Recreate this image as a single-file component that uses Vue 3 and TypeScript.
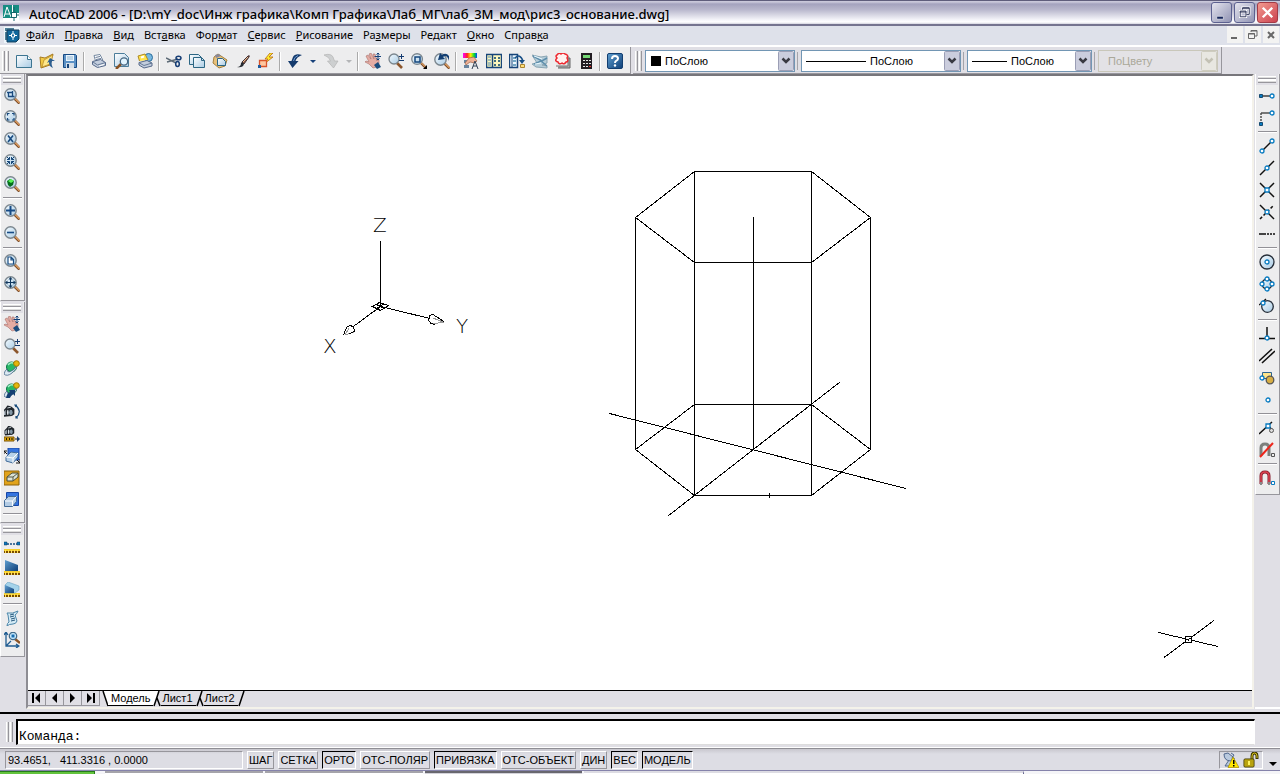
<script setup lang="ts">
interface Tool { icon: string; label: string }
type ToolGroup = Tool[]
interface Menu { pre: string; key: string; post: string }
interface Mode { text: string; on: boolean }

const t = (icon: string, label: string): Tool => ({ icon, label })
const m = (pre: string, key: string, post: string): Menu => ({ pre, key, post })

const menus: Menu[] = [
  m('', 'Ф', 'айл'), m('', 'П', 'равка'), m('', 'В', 'ид'), m('Вст', 'а', 'вка'),
  m('Фор', 'м', 'ат'), m('', 'С', 'ервис'), m('', 'Р', 'исование'), m('Ра', 'з', 'меры'),
  m('Ре', 'д', 'акт'), m('', 'О', 'кно'), m('Справ', 'к', 'а'),
]

const standard: ToolGroup[] = [
  [t('new', 'Создать'), t('open', 'Открыть'), t('save', 'Сохранить')],
  [t('print', 'Печать'), t('preview', 'Просмотр'), t('publish', 'Публикация')],
  [t('cut', 'Вырезать'), t('copy', 'Копировать'), t('paste', 'Вставить'), t('brush', 'Копирование свойств'), t('block', 'Редактор блоков')],
  [t('undo', 'Отменить'), t('redo', 'Повторить')],
  [t('pan', 'Панорамирование'), t('zoomrt', 'Зумирование'), t('zoomwin', 'Показать рамкой'), t('zoomprev', 'Показать предыдущий')],
  [t('props', 'Свойства'), t('center', 'Центр управления'), t('palettes', 'Инструментальные палитры'), t('sheets', 'Диспетчер подшивок'), t('markup', 'Диспетчер пометок'), t('calc', 'Калькулятор')],
  [t('help', 'Справка')],
]

const leftBars: ToolGroup[][] = [
  [
    [t('zwindow', 'Рамка'), t('zdynamic', 'Динамика'), t('zscale', 'Масштаб'), t('zcenter', 'Центр'), t('zobject', 'Объект')],
    [t('zin', 'Увеличить'), t('zout', 'Уменьшить')],
    [t('zall', 'Все'), t('zextents', 'Границы')],
  ],
  [
    [t('pan', 'Панорама'), t('zoomrt', 'Зум'), t('orbit', 'Орбита'), t('corbit', 'Непрерывная орбита'), t('swivel', 'Шарнир'), t('distance', 'Расстояние'), t('adjust', 'Секущие плоскости'), t('front', 'Передняя плоскость'), t('back', 'Задняя плоскость')],
    [],
  ],
  [
    [t('dist', 'Расстояние'), t('area', 'Площадь'), t('mass', 'Масса')],
    [t('list', 'Список'), t('locate', 'Координаты')],
  ],
]

const snapBar: ToolGroup[] = [
  [t('track', 'Точка отслеживания'), t('from', 'Смещение')],
  [t('endp', 'Конточка'), t('midp', 'Середина'), t('inter', 'Пересечение'), t('appint', 'Кажущееся пересечение'), t('ext', 'Продолжение')],
  [t('cen', 'Центр'), t('quad', 'Квадрант'), t('tan', 'Касательная')],
  [t('perp', 'Нормаль'), t('par', 'Параллельно'), t('ins', 'Точка вставки'), t('node', 'Узел')],
  [t('near', 'Ближайшая'), t('none', 'Ничего')],
  [t('magnet', 'Режимы привязки')],
]

const modes: Mode[] = [
  { text: 'ШАГ', on: false }, { text: 'СЕТКА', on: false }, { text: 'ОРТО', on: true },
  { text: 'ОТС-ПОЛЯР', on: false }, { text: 'ПРИВЯЗКА', on: true }, { text: 'ОТС-ОБЪЕКТ', on: false },
  { text: 'ДИН', on: false }, { text: 'ВЕС', on: true }, { text: 'МОДЕЛЬ', on: true },
]

const navs = [
  { label: 'Первый лист', d: 'M4 3h2v10h-2zM12 3v10l-5-5z' },
  { label: 'Предыдущий лист', d: 'M11 3v10l-5-5z' },
  { label: 'Следующий лист', d: 'M6 3v10l5-5z' },
  { label: 'Последний лист', d: 'M5 3v10l5-5zM11 3h2v10h-2z' },
]
</script>

<template>
  <svg class="defs" aria-hidden="true">
    <defs>
      <linearGradient id="gGlass" x2="1" y2="1"><stop offset="0" stop-color="#f4fbff" /><stop offset="1" stop-color="#a9cbe4" /></linearGradient>
      <linearGradient id="gPage" x2="1" y2="1"><stop offset="0" stop-color="#fff" /><stop offset="1" stop-color="#a9cbe4" /></linearGradient>
      <linearGradient id="gBlue" x2="1" y2="1"><stop offset="0" stop-color="#5f9fd0" /><stop offset="1" stop-color="#0f3f78" /></linearGradient>
      <linearGradient id="gHue"><stop offset="0" stop-color="#f0f" /><stop offset=".3" stop-color="#f22" /><stop offset=".55" stop-color="#fe0" /><stop offset=".8" stop-color="#0d3" /><stop offset="1" stop-color="#04f" /></linearGradient>
    </defs>
    <symbol id="mag" viewBox="0 0 16 16"><path d="M10.500 10.500l5 5" stroke="#7a4a26" stroke-width="2.600" /><path d="M11 10.500l4.500 4.500" stroke="#dd9f63" stroke-width="1.300" /><circle cx="6.500" cy="6.500" r="5.700" fill="url(#gGlass)" stroke="#7b868e" stroke-width="1.400" /></symbol>
    <symbol id="ruler" viewBox="0 0 16 16"><path d="M0 11h16v4H0z" fill="#7a4c00" /><path d="M0 11h16v2H0z" fill="#f7cf28" /><path d="M1.500 12v3M4.500 12v3M7.500 12v3M10.500 12v3M13.500 12v3" stroke="#ffe258" /></symbol>
    <symbol id="new" viewBox="0 0 16 16"><path d="M.5 2.500h11l4 4v8H.5z" fill="url(#gPage)" stroke="#3d7591" /><path d="M11.500 2.500v4h4" fill="#fff" stroke="#3d7591" /></symbol>
    <symbol id="open" viewBox="0 0 16 16"><path d="M1 4l5 1 8-4-3 11-9 3z" fill="#f2ca45" stroke="#a67b22" /><path d="M3 14l2-7 9-5-3 9z" fill="#ffe889" stroke="#b38524" stroke-width=".7" /><path d="M14 15c-3-1-4-3-4-6l-2 1 3-5 5 3h-3c-1 3 0 5 1 7z" fill="#2d5f91" /></symbol>
    <symbol id="save" viewBox="0 0 16 16"><path d="M1.500 1.500h12l1 1v12h-13z" fill="#5c91c5" stroke="#174a83" /><path d="M4 2h8v6H4z" fill="#e9f4fc" /><path d="M4 10h8v5H4z" fill="#d5dee7" /><path d="M5 11h2v4H5z" fill="#17447a" /><path d="M5 4h6M5 6h6" stroke="#8eb3d0" /></symbol>
    <symbol id="print" viewBox="0 0 16 16"><path d="M4.500 8L3 2.500l6-1 3 6" fill="#fff" stroke="#7488a0" /><path d="M1.500 8.500l8-2 5 3v3l-8 2-5-3z" fill="#c3cddd" stroke="#56698a" /><path d="M2 9l4.500 3 8-2.500M4.500 4.500l4.500-1M5 6.500l5-1" stroke="#667a97" fill="none" /><path d="M8 13l5-1.500" stroke="#fff" /></symbol>
    <symbol id="preview" viewBox="0 0 16 16"><path d="M.5.5h10l4 4v9H.5z" fill="url(#gPage)" stroke="#4b7d9b" /><path d="M7 11l-5 5" stroke="#895324" stroke-width="2.500" /><circle cx="10" cy="8.500" r="3.700" fill="#e1f4ff" stroke="#466680" stroke-width="1.300" /></symbol>
    <symbol id="publish" viewBox="0 0 16 16"><circle cx="11.500" cy="4.500" r="4" fill="#77b8e1" stroke="#2c6d9a" /><path d="M2.500 8L1 3l7-2 3 6" fill="#ffe24c" stroke="#ae8b22" /><path d="M2 9.500l8-2 5 2.500v3l-8 2-5-3z" fill="#c3cddd" stroke="#56698a" /><path d="M2.500 10l4.500 2.500 8-2.500" fill="none" stroke="#667a97" /><path d="M4 4.500l3-1" stroke="#fff" stroke-width="2" /></symbol>
    <symbol id="cut" viewBox="0 0 16 16"><path d="M0 5l10 5M1 9l11-3" stroke="#5d6a76" stroke-width="1.500" /><ellipse cx="12.500" cy="5" rx="2.500" ry="1.800" fill="none" stroke="#163d75" stroke-width="1.500" /><ellipse cx="11.500" cy="11" rx="1.800" ry="2.500" fill="none" stroke="#163d75" stroke-width="1.500" /></symbol>
    <symbol id="copy" viewBox="0 0 16 16"><path d="M.5 1.500h9l3 3v7H.5z" fill="url(#gPage)" stroke="#2c6684" /><path d="M4.500 4.500h8l3 3v7h-11z" fill="url(#gPage)" stroke="#2c6684" /><path d="M12.500 4.500v3h3" fill="none" stroke="#2c6684" /></symbol>
    <symbol id="paste" viewBox="0 0 16 16"><path d="M2 4l4-3 9 6-2 6-6 2-6-5z" fill="#e8c07a" stroke="#a3803f" /><path d="M3 2l4-1 2 2-5 2z" fill="#889" /><path d="M5.500 5.500h5l3 3v4h-8z" fill="url(#gPage)" stroke="#2c6684" /></symbol>
    <symbol id="brush" viewBox="0 0 16 16"><path d="M7 9l6-6q2-1 1 1L9 11z" fill="#8d5b42" stroke="#443337" /><path d="M2 14q4 0 4-4l1-1 2 2q-1 4-7 3z" fill="#252a31" /><path d="M8 9l5-5" stroke="#e8bc94" /></symbol>
    <symbol id="block" viewBox="0 0 16 16"><path d="M12 0L7 6h3L6 11l9-7h-4l4-4z" fill="#ffec28" stroke="#b66712" stroke-width=".8" /><path d="M1.500 7.500h7v6h-7z" fill="#ffc79f" stroke="#d8532b" stroke-width="1.300" /><path d="M0 12h3v3H0z" fill="#1e5c9e" /></symbol>
    <symbol id="undo" viewBox="0 0 16 16"><path d="M15 2Q8 0 6 4L4.500 8H1l4.500 7 6-7H8.500q1-4 6.500-6z" fill="#143a6c" /><path d="M11 2.500Q7 4 6.500 8" stroke="#6e9ad0" fill="none" /></symbol>
    <symbol id="redo" viewBox="0 0 16 16"><path d="M1 2q7-2 9 2l1.500 4H15l-4.500 7-6-7h3Q6.500 4 1 2z" fill="#cdcfd0" stroke="#b5b5b5" stroke-width=".7" /></symbol>
    <symbol id="pan" viewBox="0 0 16 16"><path d="M1 3l2-1 3 4-2-5 2-1 3 6-1-5 2 0 2 7v-2l2 1v4l-2 3-4 1-4-4-4-2 1-1 3 1z" fill="#e5aca3" stroke="#a8706c" stroke-width=".6" /><path d="M9 12l4-3 3 5-4 2z" fill="#1b4c7d" /><path d="M13 0v7M9.500 3.500h7" stroke="#123f78" /><path d="M11.500 1.500L13 0l1.500 1.500M11.500 5.500L13 7l1.500-1.500" fill="none" stroke="#123f78" /></symbol>
    <symbol id="zoomrt" viewBox="0 0 16 16"><path d="M9 10l5 5" stroke="#8c562c" stroke-width="2.600" /><circle cx="6" cy="6" r="5" fill="url(#gGlass)" stroke="#7b868e" stroke-width="1.300" /><path d="M11 3.500h5M13.500 1v5M11 7.500h5" stroke="#143b70" /></symbol>
    <symbol id="zoomwin" viewBox="0 0 16 16"><use href="#mag" width="15" height="15" /><path d="M4 4h5v5H4z" fill="none" stroke="#16477d" stroke-width="1.500" /><path d="M16 12v4h-4z" /></symbol>
    <symbol id="zoomprev" viewBox="0 0 16 16"><use href="#mag" width="16" height="16" /><path d="M15 8V3Q12-1 8 2L6 0 4 7l7-1-2-2q4-3 6 4z" fill="#143f73" /></symbol>
    <symbol id="props" viewBox="0 0 16 16"><path d="M0 0h14v5H0z" fill="url(#gHue)" /><path d="M1 7h5v3H1zM1 12h5v3H1z" fill="#68849f" /><path d="M6 5l5-1 3 4-2 2-5-1-4 3-1-2z" fill="#efb095" stroke="#9b6347" stroke-width=".7" /><path d="M9 16l3-8 3 8M10 13h4" stroke="#314055" fill="none" /></symbol>
    <symbol id="center" viewBox="0 0 16 16"><path d="M.5 1.500h15v13H.5z" fill="#fff8bd" stroke="#17457a" stroke-width="1.500" /><path d="M6.500 2v12" stroke="#17457a" stroke-width="1.500" /><path d="M2 4h3M2 7h3M2 10h3M2 12h3" stroke="#4a87b5" /><path d="M8 4h2v2H8zM12 4h2v2h-2zM8 7h2v2H8zM12 7h2v2h-2zM8 11h2v2H8zM12 11h2v2h-2z" fill="#416e80" /></symbol>
    <symbol id="palettes" viewBox="0 0 16 16"><path d="M.5 1.500h8v13h-8z" fill="#edf7ff" stroke="#17457a" stroke-width="1.500" /><path d="M3 2v12" stroke="#17457a" /><path d="M4 4h3v2H4zM4 7h3v2H4zM4 11h3v2H4z" fill="#70a6c4" /><path d="M6 5q5-5 8 3" fill="none" stroke="#174f87" stroke-width="1.500" /><path d="M10 7l6 0-3 4z" fill="#174f87" /><path d="M11.500 11.500h4v3h-4z" fill="#ffdf7a" stroke="#aa8531" /></symbol>
    <symbol id="sheets" viewBox="0 0 16 16"><path d="M0 2l9 2 6-1v7l-5 2 5 1v2l-11-1-4-3 5-1z" fill="#b4ccd8" stroke="#8aa5b3" /><path d="M1 3l9 5 5-3M2 11l7-3 6 5" fill="none" stroke="#5c8dab" stroke-width="1.500" /><path d="M2 3l8 3M3 11l6-1" stroke="#e9f8ff" /></symbol>
    <symbol id="markup" viewBox="0 0 16 16"><path d="M5 5h10v10H3" fill="#aaa" stroke="#666" /><path d="M3 3h10v10H1" fill="#e5e5e5" stroke="#777" /><path d="M2 2q2-3 4-1 2-2 4 0 4 1 2 4 2 4-1 4-2 3-4 1-3 2-4-1-4-1-1-4-2-2 0-3z" fill="#fff1ef" stroke="#ee2930" stroke-width="1.500" /></symbol>
    <symbol id="calc" viewBox="0 0 16 16"><path d="M3 0h11v16H3z" fill="#221d22" /><path d="M5 2h7v3H5z" fill="#75d875" /><path d="M5 7h2v1H5zM8 7h2v1H8zM11 7h2v1h-2zM5 10h2v1H5zM8 10h2v1H8zM11 10h2v1h-2zM5 13h2v1H5zM8 13h2v1H8z" fill="#e5e5e5" /><path d="M11 13h2v1h-2z" fill="#e33" /></symbol>
    <symbol id="help" viewBox="0 0 16 16"><rect x=".5" y=".5" width="15" height="15" rx="1.500" fill="url(#gBlue)" stroke="#123e70" /><path d="M5 6q0-3 3-3t3 2.500q0 1.500-1.500 2.200T8 10" fill="none" stroke="#fff" stroke-width="2" /><circle cx="8" cy="12.500" r="1.200" fill="#fff" /></symbol>

    <symbol id="zwindow" viewBox="0 0 16 16"><use href="#mag" width="16" height="16" /><path d="M4.500 4.500h4v4h-4zM3 4.500h1M9 8.500h1.500M8.500 3v1" fill="none" stroke="#194a7f" stroke-width="1.300" /></symbol>
    <symbol id="zdynamic" viewBox="0 0 16 16"><use href="#mag" width="16" height="16" /><path d="M3.500 5.500v-2h2M8 3.500h2v2M10 8v2H8M5.500 10h-2V8" fill="none" stroke="#194a7f" stroke-width="1.200" /></symbol>
    <symbol id="zscale" viewBox="0 0 16 16"><use href="#mag" width="16" height="16" /><path d="M4 3.500l5 6.500M9 3.500L4 10" stroke="#174a80" stroke-width="1.600" /></symbol>
    <symbol id="zcenter" viewBox="0 0 16 16"><use href="#mag" width="16" height="16" /><path d="M3 3l2.500 2.500M10 3L7.500 5.500M3 10l2.500-2.500M10 10L7.500 7.500M3 5.500h2.500V3M7.500 3v2.500H10M3 7.500h2.500V10M7.500 10V7.500H10" fill="none" stroke="#164779" /></symbol>
    <symbol id="zobject" viewBox="0 0 16 16"><use href="#mag" width="16" height="16" /><path d="M3 5l3-2 4 2-1 4-3 2-2-2z" fill="#05701e" /><path d="M4 5l3-2 3 2-3 2z" fill="#56f555" /></symbol>
    <symbol id="zin" viewBox="0 0 16 16"><use href="#mag" width="16" height="16" /><path d="M6.500 2v9M2 6.500h9" stroke="#164b86" stroke-width="2" /></symbol>
    <symbol id="zout" viewBox="0 0 16 16"><use href="#mag" width="16" height="16" /><path d="M3 6.500h7" stroke="#164b86" stroke-width="1.600" /></symbol>
    <symbol id="zall" viewBox="0 0 16 16"><use href="#mag" width="16" height="16" /><path d="M4 3h3l2.500 2.500V10H4zM7 3v3h2.500" fill="#fff" stroke="#194d82" stroke-width="1.200" /></symbol>
    <symbol id="zextents" viewBox="0 0 16 16"><use href="#mag" width="16" height="16" /><path d="M6.500 2v9M2 6.500h9" stroke="#12385f" /><path d="M6.500 1l2 2.500h-4zM6.500 12l2-2.500h-4zM1 6.500l2.500-2v4zM12 6.500l-2.500-2v4z" fill="#12385f" /></symbol>
    <symbol id="orbit" viewBox="0 0 16 16"><circle cx="7.500" cy="7" r="5" fill="#28b867" stroke="#087246" /><path d="M4 5q2-3 5-2" fill="none" stroke="#a5f0c8" stroke-width="1.500" /><path d="M0 14q1-4 3-5 0 3 2 3 5-1 9-8-1 5-6 9-5 4-8 1z" fill="#dbe9f2" stroke="#466889" stroke-width=".8" /><circle cx="12.500" cy="3.500" r="2.800" fill="#e4b60c" stroke="#a57900" /></symbol>
    <symbol id="corbit" viewBox="0 0 16 16"><use href="#orbit" width="16" height="16" /><path d="M2 16q1-5 4-6L5 8h6v6l-2-2q-2 1-3 4z" fill="#143f72" /></symbol>
    <symbol id="camera" viewBox="0 0 16 16"><path d="M0 7l3-3 2-3 4 1 4 3v6l-3 2-9 1-1-2z" fill="#20252b" /><path d="M1 8l2-2v6H1z" fill="#b4bec7" /><ellipse cx="9" cy="9" rx="2.600" ry="3.600" fill="#8296a5" stroke="#0f151b" /><ellipse cx="5.500" cy="9" rx="1" ry="3" fill="#dce3e8" /><path d="M5 4l4-1" stroke="#dbe3e8" /></symbol>
    <symbol id="swivel" viewBox="0 0 16 16"><use href="#camera" x="-1" width="14" height="15" /><path d="M11 1q8 6 1 13M13 1h-2l1 2M12 12v2h2" fill="none" stroke="#174a7b" stroke-width="1.200" /></symbol>
    <symbol id="distance" viewBox="0 0 16 16"><use href="#camera" y="-1" width="13" height="12" /><path d="M0 11h10v4H0z" fill="#e5ad10" stroke="#7b5200" /><path d="M2.500 12v2M5.500 12v2M8 12v2M11 13h3" stroke="#302000" stroke-width="1.200" /><path d="M13 10l3 3-3 3z" fill="#143a70" /></symbol>
    <symbol id="adjust" viewBox="0 0 16 16"><path d="M4 0h11v12H4z" fill="#3474df" stroke="#1746a5" /><path d="M2 9l5-5 7 1v4l-5 6-7-2z" fill="#b8d2e9" stroke="#416b99" /><path d="M2 9l7 1 5-5M9 10v5" fill="none" stroke="#fff" /><path d="M0 6V3h3M16 11v4h-4M0 3l3 3M13 12l3 3" fill="none" stroke="#151515" /></symbol>
    <symbol id="front" viewBox="0 0 16 16"><path d="M0 1h15v14H0z" fill="#e1a31c" stroke="#8d620a" /><path d="M3 7l5-4h6v4l-5 4H3z" fill="#dbe1d5" stroke="#494c39" /><path d="M3 7h6l5-4M9 7v4" fill="none" stroke="#555944" /></symbol>
    <symbol id="back" viewBox="0 0 16 16"><path d="M2.500.5h12v13h-12z" fill="#3474df" stroke="#1746a5" /><path d="M.5 8.500l4-4h8v5l-4 5h-8z" fill="#b4cce4" stroke="#426b97" /><path d="M1 9h7.500l4-4.500M8.500 9v5" fill="none" stroke="#fff" /></symbol>
    <symbol id="dist" viewBox="0 0 16 16"><use href="#ruler" width="16" height="16" /><path d="M3 6h10" stroke="#174e84" stroke-width="1.500" stroke-dasharray="2 1" /><path d="M0 4h3v3H0zM13 4h3v3h-3z" fill="#0d78bf" stroke="#10395a" stroke-width=".5" /></symbol>
    <symbol id="area" viewBox="0 0 16 16"><use href="#ruler" width="16" height="16" /><path d="M1 0l13 5v6H1z" fill="url(#gBlue)" /></symbol>
    <symbol id="mass" viewBox="0 0 16 16"><use href="#ruler" width="16" height="16" /><path d="M1 3l3-3 11 4v4l-4 3H1z" fill="#a5d3ea" stroke="#6aa3c4" stroke-width=".6" /><path d="M1 3l9 4v4H1z" fill="url(#gBlue)" /></symbol>
    <symbol id="list" viewBox="0 0 16 16"><path d="M3 3q6 1 11-2-1 3-3 4l2 6q-1 3-4 3-4 0-6 2 0-3 2-4L4 5z" fill="#d3eaf5" stroke="#4b86a9" /><path d="M6 5l4-1M6 7l4-1M7 9l4-1M7 11l4-1" stroke="#25577c" /></symbol>
    <symbol id="locate" viewBox="0 0 16 16"><path d="M2 1v13h12M0 3l2-3 2 3M12 12l3 2-3 2M2 14l5-5" fill="none" stroke="#1f5c91" stroke-width="1.300" /><path d="M11 7l5 4" stroke="#8d5425" stroke-width="2.500" /><circle cx="9" cy="4" r="3.700" fill="#caecff" stroke="#426b8b" stroke-width="1.300" /><path d="M7.500 2.500h3v3h-3z" fill="#176cb0" /></symbol>

    <symbol id="dot" viewBox="0 0 6 6"><circle cx="3" cy="3" r="2" fill="#fff" stroke="#087bc1" stroke-width="1.300" /></symbol>
    <symbol id="track" viewBox="0 0 16 16"><path d="M2 8h11" stroke="#333" stroke-width="1.400" /><path d="M.5 6.500h3v3h-3z" fill="#087bc1" stroke="#174b70" /><use href="#dot" x="10" y="5" width="6" height="6" /></symbol>
    <symbol id="from" viewBox="0 0 16 16"><path d="M2 3h11" stroke="#444" stroke-width="1.400" /><path d="M2 3v10" stroke="#444" stroke-width="1.400" stroke-dasharray="2 1" /><path d="M.5 12.500h3v3h-3z" fill="#087bc1" stroke="#174b70" /><use href="#dot" x="10" width="6" height="6" /></symbol>
    <symbol id="endp" viewBox="0 0 16 16"><path d="M3 13L13 3" stroke="#111" stroke-width="1.500" /><use href="#dot" x="10" width="6" height="6" /><use href="#dot" y="10" width="6" height="6" /></symbol>
    <symbol id="midp" viewBox="0 0 16 16"><path d="M1 15L15 1" stroke="#111" stroke-width="1.500" /><use href="#dot" x="5" y="5" width="6" height="6" /></symbol>
    <symbol id="inter" viewBox="0 0 16 16"><path d="M1 15L15 1M1 1l14 14" stroke="#111" stroke-width="1.500" /><path d="M6 6h4v4H6z" fill="#fff" stroke="#087bc1" stroke-width="1.300" /></symbol>
    <symbol id="appint" viewBox="0 0 16 16"><path d="M1 1l14 14" stroke="#111" stroke-width="1.500" /><path d="M1 15L15 1" stroke="#111" stroke-width="1.500" stroke-dasharray="3 2" /><use href="#dot" x="5" y="5" width="6" height="6" /></symbol>
    <symbol id="ext" viewBox="0 0 16 16"><path d="M0 8h7M8 8h2M11 8h2M14 8h2" stroke="#444" stroke-width="2" /></symbol>
    <symbol id="cen" viewBox="0 0 16 16"><circle cx="8" cy="8" r="7" fill="url(#gGlass)" stroke="#252d38" stroke-width="1.300" /><use href="#dot" x="5" y="5" width="6" height="6" /></symbol>
    <symbol id="quad" viewBox="0 0 16 16"><circle cx="8" cy="8" r="5" fill="url(#gGlass)" stroke="#252d38" stroke-width="1.300" /><use href="#dot" x="5" width="6" height="6" /><use href="#dot" x="5" y="10" width="6" height="6" /><use href="#dot" y="5" width="6" height="6" /><use href="#dot" x="10" y="5" width="6" height="6" /></symbol>
    <symbol id="tan" viewBox="0 0 16 16"><circle cx="8.500" cy="8.500" r="5.800" fill="url(#gGlass)" stroke="#252d38" stroke-width="1.300" /><path d="M0 7l7-6" stroke="#111" stroke-width="1.300" /><use href="#dot" x="1" y="2" width="6" height="6" /></symbol>
    <symbol id="perp" viewBox="0 0 16 16"><path d="M8 1v11M0 12.500h16" stroke="#111" stroke-width="1.500" /><use href="#dot" x="5" y="9" width="6" height="6" /></symbol>
    <symbol id="par" viewBox="0 0 16 16"><path d="M0 13L13 1M3 15L16 3" stroke="#111" stroke-width="1.600" /></symbol>
    <symbol id="ins" viewBox="0 0 16 16"><path d="M3.500 2.500h9v6h-9z" fill="#ffe489" stroke="#2c6591" /><circle cx="11" cy="10" r="3.800" fill="#d7ae45" stroke="#555" stroke-width="1.300" /><use href="#dot" y="5" width="6" height="6" /></symbol>
    <symbol id="node" viewBox="0 0 16 16"><use href="#dot" x="6" y="5" width="6" height="6" /></symbol>
    <symbol id="near" viewBox="0 0 16 16"><path d="M0 14L13 2M9 5l4 5" stroke="#111" stroke-width="1.500" /><path d="M7 4h4v4H7z" fill="#fff" stroke="#087bc1" stroke-width="1.300" /><circle cx="12.500" cy="10.500" r="2" fill="#ddd" stroke="#555" /></symbol>
    <symbol id="none" viewBox="0 0 16 16"><path d="M2 14V6q0-4 4-4t4 4v8" fill="none" stroke="#7d807d" stroke-width="3" /><path d="M1 15L14 1" stroke="#ed261c" stroke-width="2" /><path d="M12.500 11.500h3v3h-3z" fill="#eee" stroke="#555" /></symbol>
    <symbol id="magnet" viewBox="0 0 16 16"><path d="M2 14V6q0-4 4-4t4 4v8" fill="none" stroke="#831b2a" stroke-width="3" /><path d="M2 12V6q0-4 4-4t4 4v6" fill="none" stroke="#dc4251" stroke-width="1.500" /><path d="M1 12h2v3H1zM9 12h2v3H9z" fill="#888" /><path d="M12.500 11.500h3v3h-3z" fill="#fff" stroke="#087bc1" /></symbol>
  </svg>

  <div class="app">
    <header class="title">
      <svg class="logo" viewBox="0 0 16 16" aria-hidden="true"><path d="M0 0h16v16H0z" fill="#fff" /><path d="M0 0h9v13H0zM10 0h6v8h-6z" fill="#168c82" /><path d="M1 12L4 2l4 10M2 9h5" fill="none" stroke="#fff" /><path d="M8.500 7.500h5v5h-5zM11 2v5M13 10h3M11 13v3" fill="none" stroke="#17656a" /></svg>
      <h1>AutoCAD 2006 - [D:\mY_doc\Инж графика\Комп Графика\Лаб_МГ\лаб_3М_мод\рис3_основание.dwg]</h1>
      <div class="winbtns">
        <button type="button" aria-label="Свернуть"><svg viewBox="0 0 20 20"><path d="M5 14h7v3H5z" fill="#17275d" stroke="#fff" stroke-width=".6" /></svg></button>
        <button type="button" aria-label="Восстановить"><svg viewBox="0 0 20 20"><path d="M8 7V5h7v7h-3M8 5.500h7M5.500 8.500h6v6h-6zM5 9.500h7" fill="none" stroke="#fff" stroke-width="2.500" /><path d="M8 7V5h7v7h-3M8 5.500h7M5.500 8.500h6v6h-6zM5 9.500h7" fill="none" stroke="#293055" /></svg></button>
        <button type="button" class="close" aria-label="Закрыть"><svg viewBox="0 0 20 20"><path d="M5 5l10 10M15 5L5 15" stroke="#fff" stroke-width="2.500" /></svg></button>
      </div>
    </header>

    <nav class="menu">
      <svg class="doc" viewBox="0 0 16 16" aria-hidden="true"><path d="M0 0h16v16H0z" fill="#eef6fb" /><path d="M1 1h9v3H1zM1 5h3v8H1z" fill="#4f8097" /><path d="M3 3h12v9l-3 3H3z" fill="#10689c" stroke="#123c5b" /><path d="M9 4v9M5 8.500h8" stroke="#fff" /><path d="M7.500 7h3v3h-3z" fill="#10689c" stroke="#fff" /></svg>
      <button v-for="x in menus" :key="x.pre + x.key" type="button" class="mitem">{{ x.pre }}<u>{{ x.key }}</u>{{ x.post }}</button>
      <div class="mdi">
        <button type="button" aria-label="Свернуть окно"><svg viewBox="0 0 16 16"><path d="M4 10h6v2H4z" fill="#686868" /></svg></button>
        <button type="button" aria-label="Восстановить окно"><svg viewBox="0 0 16 16"><path d="M6 5V3.500h6V9h-2M6 4h6M3.500 6.500h6v5h-6zM3 7h7" fill="none" stroke="#686868" /></svg></button>
        <button type="button" aria-label="Закрыть окно"><svg viewBox="0 0 16 16"><path d="M5 5l6 6M11 5l-6 6" stroke="#686868" stroke-width="2" /></svg></button>
      </div>
    </nav>

    <div class="toolbars">
      <div class="hbar std">
        <i class="grip"></i>
        <template v-for="(g, i) in standard" :key="i">
          <i v-if="i" class="vsep"></i>
          <template v-for="b in g" :key="b.icon">
            <button type="button" class="tb" :aria-label="b.label"><svg><use :href="'#' + b.icon" /></svg></button>
            <button v-if="i === 3" type="button" class="drop" :class="{ off: b.icon === 'redo' }" :aria-label="b.label + ': список'"></button>
          </template>
        </template>
      </div>
      <div class="hbar prop">
        <i class="grip"></i>
        <label class="combo color"><span class="swatch"></span><select aria-label="Цвет"><option>ПоСлою</option></select></label>
        <i class="csep"></i>
        <label class="combo ltype"><span class="line"></span><select aria-label="Тип линии"><option>ПоСлою</option></select></label>
        <i class="csep"></i>
        <label class="combo weight"><span class="line"></span><select aria-label="Вес линии"><option>ПоСлою</option></select></label>
        <i class="csep"></i>
        <label class="combo plot"><select aria-label="Стиль печати" disabled><option>ПоЦвету</option></select></label>
      </div>
    </div>

    <div class="work">
      <aside class="side">
        <div v-for="(bar, n) in leftBars" :key="n" class="vbar">
          <i class="hgrip"></i>
          <template v-for="(g, i) in bar" :key="i">
            <i v-if="i" class="hsep"></i>
            <button v-for="b in g" :key="b.icon" type="button" class="tb" :aria-label="b.label"><svg><use :href="'#' + b.icon" /></svg></button>
          </template>
        </div>
      </aside>

      <main class="docwin">
        <svg class="canvas" role="img" aria-label="Чертёж">
          <g transform="translate(-28 -76)" fill="none" stroke="#000" shape-rendering="crispEdges">
            <path d="M694.500 171.500H811.500L870.500 217.500L811.500 262.500H694.500L635.500 217.500Z" />
            <path d="M694.500 404.500H811.500L870.500 449.500L811.500 495.500H694.500L635.500 449.500Z" />
            <path d="M694.500 171.500V495.500M811.500 171.500V495.500M635.500 217.500V449.500M870.500 217.500V449.500M753.500 217V450" />
            <path d="M609.500 413.500L906 488.500M668 516L840 382M769.500 493V498" />
            <path d="M380.500 241V306.500L430 318.500M380.500 306.500L354 326" />
            <path d="M372.500 306.500L379.500 302.500L388.500 305.500L380.500 310.500ZM376.500 304.500L384.500 308.500M384.500 303.500L376.500 308.500" />
            <path d="M433 323.500L444 322.500M433 318L443 322M345 335L349 328M345 335L354 332" stroke="#999" />
            <path d="M444 321.500L433 314.500L429.500 315.500L428.500 320.500L431 323.500L435 324.500" />
            <path d="M343.500 335L346.500 327.500L349.500 325.500L353.500 326.500L354.500 331.500L349 334" />
            <path d="M1158.500 632.500L1218 646.500M1164 657.500L1214 620.500" /><path d="M1185.500 636.500H1191.500V642.500H1185.500Z" fill="#fff" /><path d="M1186 639h2v2M1189 638h2" />
          </g>
          <g class="axis" transform="translate(-28 -76)"><text x="373" y="232">Z</text><text x="323" y="353">X</text><text x="456" y="333">Y</text></g>
        </svg>
        <div class="tabs">
          <button v-for="n in navs" :key="n.label" type="button" class="nav" :aria-label="n.label"><svg viewBox="0 0 17 14"><path :d="n.d" transform="translate(0 -1)" /></svg></button>
          <svg class="slant" viewBox="0 0 8 16"><path d="M3 0l5 15V0z" fill="#fff" /><path d="M3 0l5 15" class="edge" /></svg>
          <button type="button" class="tab active">Модель</button>
          <svg class="slant" viewBox="0 0 8 16"><path d="M0 0h6L1 15H0z" fill="#fff" /><path d="M6 0L1 15M4 7l3 8" class="edge" /></svg>
          <button type="button" class="tab">Лист1</button>
          <svg class="slant" viewBox="0 0 8 16"><path d="M6 0L1 15M4 7l3 8" class="edge" /></svg>
          <button type="button" class="tab">Лист2</button>
          <svg class="slant" viewBox="0 0 8 16"><path d="M6 0L1 15" class="edge" /></svg>
        </div>
      </main>

      <aside class="side right">
        <div class="vbar">
          <i class="hgrip"></i>
          <template v-for="(g, i) in snapBar" :key="i">
            <i v-if="i" class="hsep"></i>
            <button v-for="b in g" :key="b.icon" type="button" class="tb" :aria-label="b.label"><svg><use :href="'#' + b.icon" /></svg></button>
          </template>
        </div>
      </aside>
    </div>

    <section class="command">
      <i class="grip"></i>
      <div class="cmdbox"><label for="cmd">Команда:</label><input id="cmd" type="text" autocomplete="off" /></div>
    </section>

    <footer class="status">
      <output class="coords">93.4651,&nbsp; &nbsp;411.3316 , 0.0000</output>
      <button v-for="x in modes" :key="x.text" type="button" class="mode" :class="{ on: x.on }" :aria-pressed="x.on">{{ x.text }}</button>
      <div class="tray">
        <svg viewBox="0 0 16 16"><path d="M1 2q0 7 7 7l2-4-5-4zM6 8l-4 6h6M8 1l3 2-2 3 3 1" fill="#b9c9de" stroke="#51698f" /><path d="M10 5l6 10.500H5z" fill="#ffe600" stroke="#a68b00" stroke-width=".7" /><path d="M10 8h1.500v4H10zM10 13h1.500v1.500H10z" /></svg>
        <svg viewBox="0 0 16 16"><path d="M9 8V4q0-3 2.500-3T14 4v3" fill="none" stroke="#3e3600" stroke-width="3" /><path d="M9 8V4q0-3 2.500-3T14 4v2" fill="none" stroke="#dfc920" /><rect x="1" y="7" width="10" height="8" rx="1" fill="#e6cd1b" stroke="#403900" /><path d="M2 9h8M2 11h8M2 13h8" stroke="#8b7800" /><path d="M5 9h2v4H5z" fill="#fff260" /></svg>
      </div>
      <button type="button" class="traymenu" aria-label="Меню строки состояния"></button>
    </footer>
    <div class="taskbar"><i class="start"></i><i class="task a"></i><i class="task b"></i><i class="task c"></i><i class="task d"></i></div>
  </div>
</template>

<style>
body { margin: 0; }
</style>

<style scoped>
* { box-sizing: border-box; }
.defs { position: absolute; width: 0; height: 0; }
button { margin: 0; padding: 0; border: 0; background: none; color: #000; font: inherit; flex: none; }
i { display: block; flex: none; }
.app { display: flex; flex-direction: column; min-height: 100vh; background: #e0dfe5; color: #000; font: 11px/16px "Liberation Sans", sans-serif; overflow: hidden; }
.title { display: flex; align-items: center; height: 26px; padding: 0 2px 0 3px; border-top: 1px solid #5f5e7c; border-bottom: 2px solid #75748f; background: linear-gradient(#c9c8da 0, #c9c8da 1px, #a4a3be 3px, #bab9ce 9px, #f5f5fa 19px, #fff 21px, #d3d3df 23px); }
.logo { width: 16px; height: 16px; }
.title h1 { margin: 2px 0 0 10px; flex: 1; font: 500 13px/22px "Noto Sans", sans-serif; white-space: nowrap; overflow: hidden; }
.winbtns { display: flex; gap: 2px; }
.winbtns button { width: 21px; height: 21px; border: 1px solid #5c6190; border-radius: 3px; background: linear-gradient(135deg, #e4e4ee, #9194b4); }
.winbtns button.close { border-color: #a23b46; background: linear-gradient(135deg, #f29a8f, #cc4351); }
.winbtns svg { display: block; width: 19px; height: 19px; }
.menu { display: flex; align-items: center; height: 21px; padding: 0 1px 2px 4px; gap: 10px; background: #dee1ea; border-bottom: 2px solid #fff; font: 11px/16px "Noto Sans", sans-serif; }
.doc { width: 16px; height: 16px; margin-right: -4px; flex: none; }
.mdi { display: flex; gap: 2px; margin-left: auto; }
.mdi button { width: 16px; height: 17px; background: #f3f3f2; }
.mdi svg { display: block; width: 16px; height: 16px; }
.toolbars { display: flex; gap: 2px; height: 27px; }
.hbar { display: flex; align-items: center; height: 27px; padding-top: 2px; border-right: 1px solid #97969c; border-bottom: 1px solid #97969c; background: #ededee; }
.grip { width: 7px; height: 20px; background: linear-gradient(90deg, #fff 1px, #ddd 1px, #ddd 2px, #96959b 2px, #96959b 3px, #ededee 3px, #ededee 4px, #fff 4px, #fff 5px, #ddd 5px, #ddd 6px, #96959b 6px); }
.std { padding-right: 4px; padding-left: 2px; }
.std .grip { margin-right: 3px; }
.tb { display: flex; width: 23px; height: 22px; align-items: center; justify-content: center; }
.tb svg { width: 16px; height: 16px; }
.vsep { width: 2px; height: 19px; margin: 0 2px; border-left: 1px solid #aaa; border-right: 1px solid #fff; }
.drop { width: 13px; height: 22px; display: grid; place-items: center; }
.drop::before { content: ""; border: 3px solid transparent; border-top-color: #164079; border-bottom: 0; }
.drop.off::before { border-top-color: #b4b5b7; }
.prop { padding-right: 3px; padding-left: 2px; background: #e0dfe5; }
.prop .grip { margin-right: 3px; }
.combo { display: flex; align-items: center; height: 22px; border: 1px solid #7296b4; background: #fff; }
.color { width: 150px; }
.ltype { width: 160px; }
.weight { width: 125px; }
.plot { width: 120px; border-color: #c9c7ba; background: #e3e2e6; }
.csep { width: 1px; height: 18px; margin: 0 3px 0 2px; background: #a5a4aa; }
.swatch { flex: none; width: 10px; height: 10px; margin-left: 5px; background: #000; }
.line { flex: none; height: 1px; background: #000; }
.ltype .line { width: 60px; margin-left: 4px; }
.weight .line { width: 35px; margin-left: 4px; }
.combo select { flex: 1; min-width: 0; height: 20px; padding: 0 0 0 4px; border: 0; appearance: none; color: #000; font: inherit; opacity: 1; background: url("data:image/svg+xml,%3Csvg xmlns='http://www.w3.org/2000/svg' width='16' height='20'%3E%3Crect x='.5' y='.5' width='15' height='19' rx='1' fill='%23cbcddd' stroke='%239b9eb5'/%3E%3Cpath d='M4.500 7.500L8 11l3.500-3.500' fill='none' stroke='%23393942' stroke-width='2.500'/%3E%3C/svg%3E") right center no-repeat; }
.plot select { padding-left: 9px; color: #aaa899; background-image: url("data:image/svg+xml,%3Csvg xmlns='http://www.w3.org/2000/svg' width='16' height='20'%3E%3Crect x='.5' y='.5' width='15' height='19' rx='1' fill='%23e8e7e1' stroke='%23ceccbf'/%3E%3Cpath d='M4.500 7.500L8 11l3.500-3.500' fill='none' stroke='%23c3c1b4' stroke-width='2.500'/%3E%3C/svg%3E"); }
.work { display: flex; flex: 1; min-height: 635px; }
.side { display: flex; flex-direction: column; gap: 1px; width: 26px; flex: none; }
.vbar { display: flex; flex-direction: column; align-items: center; width: 25px; padding-right: 1px; padding-bottom: 5px; border: solid #fff; border-width: 0 1px 1px; border-right-color: #97969c; border-bottom-color: #97969c; background: #ededee; }
.hgrip { align-self: stretch; height: 11px; border: 2px solid #e0dfe5; background: linear-gradient(#fff 1px, #ddd 1px, #ddd 2px, #97969c 2px, #97969c 3px, #fff 3px, #fff 5px, #ddd 5px, #ddd 6px, #97969c 6px); }
.hsep { width: 19px; height: 2px; margin: 2px 0; border-top: 1px solid #929197; border-bottom: 1px solid #fff; }
.right { width: 25px; border-bottom: 2px solid #fff; }
.docwin { display: flex; flex-direction: column; flex: 1; min-width: 0; margin-right: 1px; border: 2px solid; border-color: #77767b #f4f2ea #f4f2ea #8e8d93; }
.canvas { display: block; flex: 1; width: 100%; min-height: 0; background: #fff; }
.axis { font: 200 20px "DejaVu Sans Light", "DejaVu Sans", sans-serif; }
.tabs { display: flex; height: 17px; border-top: 1px solid #000; background: #e0dfe5; }
.nav { width: 18px; height: 15px; border-right: 1px solid #97969c; border-bottom: 1px solid #97969c; }
.nav svg { display: block; width: 17px; height: 14px; }
.slant { flex: none; width: 8px; height: 16px; }
.edge { fill: none; stroke: #000; stroke-width: 1.500; }
.tab { height: 15px; padding: 0 3px 0 1px; border-bottom: 1px solid #000; line-height: 14px; }
.tab.active { padding: 0 3px; background: #fff; }
.command { display: flex; align-items: center; height: 36px; margin-top: 3px; padding: 3px 25px 1px 6px; border-top: 2px solid #000; border-bottom: 1px solid #fff; }
.command .grip { margin-right: 3px; }
.cmdbox { display: flex; align-items: flex-end; flex: 1; height: 26px; padding: 0 0 0 1px; border: solid; border-width: 2px 1px 1px 2px; border-color: #000 #fff #ddd #000; background: #fff; font: 13px/14px "Liberation Mono", monospace; }
.cmdbox input { flex: 1; height: 14px; padding: 0; border: 0; outline: 0; font: inherit; }
.status { display: flex; align-items: center; gap: 4px; height: 23px; padding: 1px 2px 0 5px; border-top: 1px solid #8f8e94; border-bottom: 1px solid #8583ab; background: linear-gradient(#c8c7ce, #dddde4 5px, #dddde4); }
.coords { width: 238px; height: 18px; padding-left: 2px; border: 1px solid #97969c; border-right-color: #fff; border-bottom-color: #fff; line-height: 17px; white-space: pre; }
.mode { height: 18px; padding: 0 1px; border: 1px solid #fff; border-right-color: #97969c; border-bottom-color: #97969c; line-height: 16px; white-space: nowrap; }
.mode.on { border-color: #000 #fff #fff #000; }
.tray { display: flex; gap: 4px; align-items: center; height: 18px; margin-left: auto; padding: 0 3px; border: 1px solid #97969c; border-right-color: #fff; border-bottom-color: #fff; }
.tray svg { width: 16px; height: 16px; }
.traymenu { width: 11px; height: 18px; display: grid; place-items: end center; padding-bottom: 3px; }
.traymenu::before { content: ""; border: 4px solid transparent; border-top-color: #000; border-bottom: 0; }
.taskbar { display: flex; height: 3px; background: #f5f5f8; }
.start { width: 95px; background: #63c33d; border-top: 1px solid #267b1b; border-right: 1px solid #267b1b; }
.task { border-top: 2px solid #a5a4aa; background: #fff; margin-left: 2px; }
.task.a { width: 158px; margin-left: 10px; }
.task.b { width: 158px; }
.task.c { width: 157px; border-top-color: #68676e; background: #d4d3da; }
.task.d { width: 440px; border-top-color: #dddce3; border-right: 1px solid #666590; }
</style>
